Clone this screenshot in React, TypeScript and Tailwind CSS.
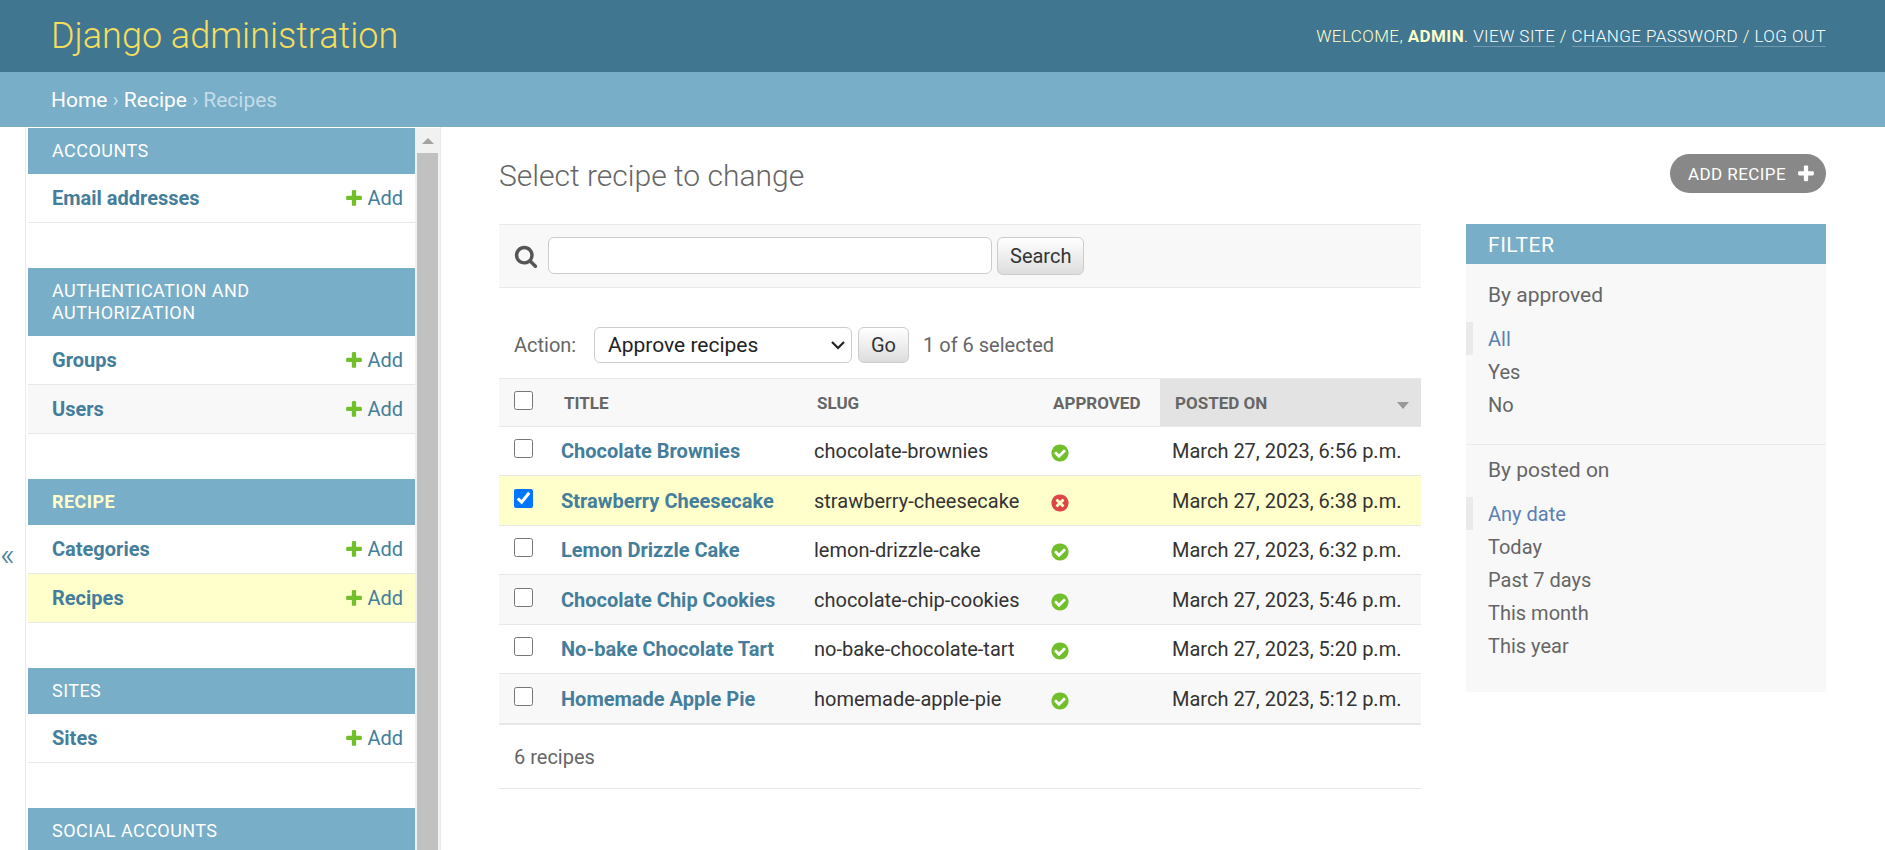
import { useState } from "react";

const PLUS =
  "M1600 796v192q0 40-28 68t-68 28h-416v416q0 40-28 68t-68 28h-192q-40 0-68-28t-28-68v-416h-416q-40 0-68-28t-28-68v-192q0-40 28-68t68-28h416v-416q0-40 28-68t68-28h192q40 0 68 28t28 68v416h416q40 0 68 28t28 68z";
const BUTTON_PLUS =
  "M1600 736v192q0 40-28 68t-68 28h-416v416q0 40-28 68t-68 28h-192q-40 0-68-28t-28-68v-416h-416q-40 0-68-28t-28-68v-192q0-40 28-68t68-28h416v-416q0-40 28-68t68-28h192q40 0 68 28t28 68v416h416q40 0 68 28t28 68z";
const YES =
  "M1412 734q0-28-18-46l-91-90q-19-19-45-19t-45 19l-408 407-226-226q-19-19-45-19t-45 19l-91 90q-18 18-18 46 0 27 18 45l362 362q19 19 45 19 27 0 46-19l543-543q18-18 18-45zm252 162q0 209-103 385.5t-279.5 279.5-385.5 103-385.5-103-279.5-279.5-103-385.5 103-385.5 279.5-279.5 385.5-103 385.5 103 279.5 279.5 103 385.5z";
const NO =
  "M1277 1122q0-26-19-45l-181-181 181-181q19-19 19-45 0-27-19-46l-90-90q-19-18-46-18-26 0-45 18l-181 181-181-181q-19-18-45-18-27 0-46 18l-90 90q-19 19-19 46 0 26 19 45l181 181-181 181q-19 19-19 45 0 27 19 46l90 90q19 18 46 18 26 0 45-18l181-181 181 181q19 18 45 18 27 0 46-18l90-90q19-19 19-46zm387-226q0 209-103 385.5t-279.5 279.5-385.5 103-385.5-103-279.5-279.5-103-385.5 103-385.5 279.5-279.5 385.5-103 385.5 103 279.5 279.5 103 385.5z";
const SEARCH =
  "M1216 832q0-185-131.5-316.5t-316.5-131.5-316.5 131.5-131.5 316.5 131.5 316.5 316.5 131.5 316.5-131.5 131.5-316.5zm512 832q0 52-38 90t-90 38q-54 0-90-38l-343-342q-179 124-399 124-143 0-273.5-55.5t-225-150-150-225-55.5-273.5 55.5-273.5 150-225 225-150 273.5-55.5 273.5 55.5 225 150 150 225 55.5 273.5q0 220-124 399l343 343q37 37 37 90z";

function Icon({ path, className }: { path: string; className: string }) {
  return (
    <svg viewBox="0 0 1792 1792" className={className} fill="currentColor" aria-hidden="true">
      <path d={path} />
    </svg>
  );
}

const apps = [
  { name: "Accounts", models: ["Email addresses"] },
  { name: "Authentication and Authorization", models: ["Groups", "Users"] },
  { name: "Recipe", models: ["Categories", "Recipes"], current: true },
  { name: "Sites", models: ["Sites"] },
  { name: "Social Accounts", models: [] },
];

const recipes = [
  { title: "Chocolate Brownies", slug: "chocolate-brownies", approved: true, posted: "March 27, 2023, 6:56 p.m." },
  { title: "Strawberry Cheesecake", slug: "strawberry-cheesecake", approved: false, posted: "March 27, 2023, 6:38 p.m." },
  { title: "Lemon Drizzle Cake", slug: "lemon-drizzle-cake", approved: true, posted: "March 27, 2023, 6:32 p.m." },
  { title: "Chocolate Chip Cookies", slug: "chocolate-chip-cookies", approved: true, posted: "March 27, 2023, 5:46 p.m." },
  { title: "No-bake Chocolate Tart", slug: "no-bake-chocolate-tart", approved: true, posted: "March 27, 2023, 5:20 p.m." },
  { title: "Homemade Apple Pie", slug: "homemade-apple-pie", approved: true, posted: "March 27, 2023, 5:12 p.m." },
];

function Header() {
  return (
    <header className="flex h-[72px] shrink-0 items-center justify-between bg-[#417690] pr-[59px] pl-[51px] text-[#ffffcc]">
      <h1 className="text-[36px] leading-[44px] font-light text-[#f5dd5d]">
        <a href="#">Django administration</a>
      </h1>
      <div className="text-[17px] leading-[20px] font-light tracking-wide uppercase">
        Welcome, <strong className="font-bold">admin</strong>.{" "}
        <a href="#" className="border-b border-white/25 text-white">View site</a> /{" "}
        <a href="#" className="border-b border-white/25 text-white">Change password</a> /{" "}
        <a href="#" className="border-b border-white/25 text-white">Log out</a>
      </div>
    </header>
  );
}

function Breadcrumbs() {
  return (
    <nav aria-label="Breadcrumbs" className="flex h-[55px] shrink-0 items-center gap-[5px] bg-[#79aec8] px-[51px] text-[21px] leading-[24px] text-[#c4dce8]">
      <a href="#" className="text-white">Home</a>
      <span>›</span>
      <a href="#" className="text-white">Recipe</a>
      <span>›</span>
      <span>Recipes</span>
    </nav>
  );
}

function Sidebar() {
  return (
    <div className="flex min-h-0 shrink-0">
      <div className="flex w-[25px] items-center justify-start pt-[130px]">
        <button type="button" aria-label="Toggle navigation" className="text-[32px] leading-[36px] font-light text-[#447e9b]">
          «
        </button>
      </div>
      <nav aria-label="Sidebar" className="flex w-[416px] border-x border-[#eaeaea] pt-px pl-[2px]">
        <div className="min-w-0 flex-1 overflow-hidden">
          {apps.map((app) => (
            <section key={app.name} className="mb-[45px]">
              <h2 className="bg-[#79aec8] py-3 pr-16 pl-6 text-[18px] leading-[22px] tracking-wide uppercase">
                <a href="#" className={app.current ? "font-bold text-[#ffffcc]" : "text-white"}>{app.name}</a>
              </h2>
              <ul>
                {app.models.map((model) => (
                  <li
                    key={model}
                    className={`flex h-[49px] items-center justify-between border-b border-[#e8e8e8] pr-3 pl-6 text-[20px] leading-[24px] text-[#447e9b] ${
                      model === "Recipes" ? "bg-[#ffffcc]" : "even:bg-[#f8f8f8]"
                    }`}
                  >
                    <a href="#" className="font-bold">{model}</a>
                    <a href="#" className="flex items-center gap-[3px]">
                      <Icon path={PLUS} className="size-5 text-[#70bf2b]" />
                      Add
                    </a>
                  </li>
                ))}
              </ul>
            </section>
          ))}
        </div>
        <div className="flex w-[25px] flex-col bg-[#f1f1f1] px-[2px]" aria-hidden="true">
          <div className="flex h-[25px] shrink-0 items-center justify-center">
            <svg viewBox="0 0 12 6" className="h-[6px] w-3" fill="#a3a3a3">
              <path d="M0 6L6 0l6 6z" />
            </svg>
          </div>
          <div className="flex-1 bg-[#c1c1c1]" />
        </div>
      </nav>
    </div>
  );
}

const buttonClass =
  "rounded-md border border-[#cccccc] bg-linear-to-b from-white to-[#dddddd] px-3 text-[20px] leading-[24px] text-[#333333]";

function SearchBar() {
  return (
    <form className="flex h-16 items-start border-y border-[#e8e8e8] bg-[#f8f8f8] px-[15px] pt-3" onSubmit={(e) => e.preventDefault()}>
      <label htmlFor="searchbar" aria-label="Search recipes" className="mr-[10px] flex h-[38px] items-center text-[#555555]">
        <Icon path={SEARCH} className="size-6" />
      </label>
      <input id="searchbar" type="text" className="h-[37px] w-[444px] rounded-md border border-[#cccccc] bg-white px-2 text-[20px] text-[#333333]" />
      <button type="submit" className={`ml-[5px] h-[38px] ${buttonClass}`}>Search</button>
    </form>
  );
}

function Actions({ count }: { count: number }) {
  return (
    <div className="mt-[39px] mb-[15px] flex h-9 items-center px-[15px] text-[20px] leading-[24px] text-[#666666]">
      <label htmlFor="action" className="w-20">Action:</label>
      <div className="relative">
        <select id="action" className="h-9 w-[258px] appearance-none rounded-md border border-[#cccccc] bg-white px-[13px] text-[21px] leading-[24px] text-[#222222]">
          <option>Approve recipes</option>
          <option>Delete selected recipes</option>
        </select>
        <svg viewBox="0 0 14 9" className="pointer-events-none absolute top-[14px] right-[7px] h-[9px] w-[14px]" fill="none" stroke="#222222" strokeWidth="2.2">
          <path d="M1 1l6 6 6-6" />
        </svg>
      </div>
      <button type="button" className={`ml-[6px] h-9 ${buttonClass}`}>Go</button>
      <span className="ml-[14px]">{count} of 6 selected</span>
    </div>
  );
}

function Results({ selected, toggle, toggleAll }: { selected: boolean[]; toggle: (i: number) => void; toggleAll: () => void }) {
  return (
    <table className="w-full table-fixed border-collapse text-left text-[20px] leading-[24px]">
      <colgroup>
        <col className="w-[50px]" />
        <col className="w-[253px]" />
        <col className="w-[236px]" />
        <col className="w-[122px]" />
        <col />
      </colgroup>
      <thead className="border-y border-[#e8e8e8] bg-[#f8f8f8] text-[17px] text-[#666666] uppercase">
        <tr className="h-[48px]">
          <th className="pb-[5px] pl-[15px]">
            <input type="checkbox" aria-label="Select all recipes" checked={selected.every(Boolean)} onChange={toggleAll} className="block size-[19px]" />
          </th>
          <th className="pl-[15px] font-bold"><a href="#">Title</a></th>
          <th className="pl-[15px] font-bold"><a href="#">Slug</a></th>
          <th className="pl-[15px] font-bold"><a href="#">Approved</a></th>
          <th className="bg-[#e3e3e3] pr-3 pl-[15px] font-bold">
            <div className="flex items-center justify-between">
              <a href="#">Posted on</a>
              <svg viewBox="0 0 12 7" className="mt-[6px] h-[7px] w-3" fill="#999999" aria-hidden="true">
                <path d="M0 0h12L6 7z" />
              </svg>
            </div>
          </th>
        </tr>
      </thead>
      <tbody className="text-[#333333]">
        {recipes.map((r, i) => (
          <tr
            key={r.slug}
            className={`border-b border-[#e8e8e8] odd:h-[49px] even:h-[50px] ${selected[i] ? "bg-[#ffffcc]" : "even:bg-[#f8f8f8]"}`}
          >
            <td className="pb-[5px] pl-[15px]">
              <input type="checkbox" aria-label={`Select ${r.title}`} checked={selected[i]} onChange={() => toggle(i)} className="block size-[19px]" />
            </td>
            <th scope="row" className="pl-3 font-bold whitespace-nowrap text-[#447e9b]"><a href="#">{r.title}</a></th>
            <td className="pl-3 whitespace-nowrap">{r.slug}</td>
            <td className="pt-1 pl-3">
              <Icon path={r.approved ? YES : NO} className={`size-5 ${r.approved ? "text-[#70bf2b]" : "text-[#dd4646]"}`} />
            </td>
            <td className="pl-3 whitespace-nowrap">{r.posted}</td>
          </tr>
        ))}
      </tbody>
    </table>
  );
}

function FilterGroup({ title, options }: { title: string; options: string[] }) {
  return (
    <>
      <h3 className="mb-[14px] px-[22px] text-[21px] leading-[25px]">{title}</h3>
      <ul className="text-[20px] leading-[24px]">
        {options.map((option, i) => (
          <li key={option} className={`pt-[5px] pb-1 ${i === 0 ? "border-l-[7px] border-[#eaeaea] pl-[15px] text-[#5b80b2]" : "pl-[22px]"}`}>
            <a href="#">{option}</a>
          </li>
        ))}
      </ul>
    </>
  );
}

function Filter() {
  return (
    <aside className="w-[360px] shrink-0 self-start bg-[#f8f8f8] text-[#666666]">
      <h2 className="bg-[#79aec8] px-[22px] pt-[9px] pb-[7px] text-[21px] leading-[24px] tracking-wide text-white uppercase">Filter</h2>
      <div className="border-b border-[#eaeaea] pt-[19px] pb-[23px]">
        <FilterGroup title="By approved" options={["All", "Yes", "No"]} />
      </div>
      <div className="pt-[13px] pb-[30px]">
        <FilterGroup title="By posted on" options={["Any date", "Today", "Past 7 days", "This month", "This year"]} />
      </div>
    </aside>
  );
}

export default function App() {
  const [selected, setSelected] = useState(recipes.map((_, i) => i === 1));
  const toggle = (i: number) => setSelected((s) => s.map((v, j) => (j === i ? !v : v)));
  const toggleAll = () => setSelected((s) => s.map(() => !s.every(Boolean)));

  return (
    <div className="flex h-screen flex-col overflow-hidden bg-white font-[Roboto,'Liberation_Sans',sans-serif] text-[#333333]">
      <Header />
      <Breadcrumbs />
      <div className="flex min-h-0 flex-1">
        <Sidebar />
        <main className="min-w-0 flex-1 overflow-hidden pt-[27px] pr-[59px] pl-[58px]">
          <div className="mb-[31px] flex items-end justify-between">
            <h1 className="text-[30px] leading-[34px] font-light text-[#666666]">Select recipe to change</h1>
            <a href="#" className="flex h-[39px] items-center gap-[10px] rounded-full bg-[#888888] pr-[10px] pl-[18px] text-[17px] leading-[20px] tracking-wide text-white uppercase">
              Add recipe
              <Icon path={BUTTON_PLUS} className="size-5" />
            </a>
          </div>
          <div className="flex gap-[45px]">
            <div className="min-w-0 flex-1">
              <SearchBar />
              <Actions count={selected.filter(Boolean).length} />
              <Results selected={selected} toggle={toggle} toggleAll={toggleAll} />
              <p className="flex h-[65px] items-center border-y border-[#e8e8e8] px-[15px] text-[20px] leading-[24px] text-[#666666]">6 recipes</p>
            </div>
            <Filter />
          </div>
        </main>
      </div>
    </div>
  );
}
